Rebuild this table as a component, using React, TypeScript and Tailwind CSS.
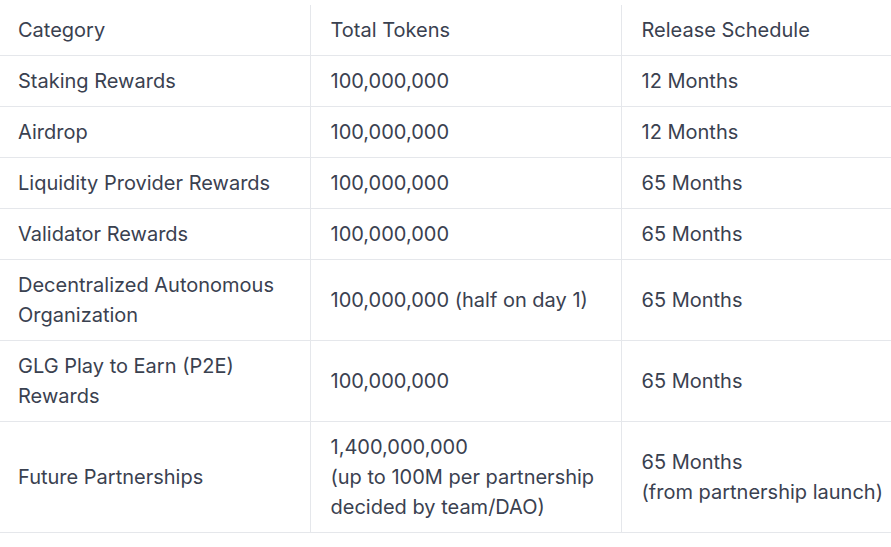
import React from 'react'

type Row = {
  category: string[]
  tokens: string[]
  release: string[]
}

const rows: Row[] = [
  { category: ['Staking Rewards'], tokens: ['100,000,000'], release: ['12 Months'] },
  { category: ['Airdrop'], tokens: ['100,000,000'], release: ['12 Months'] },
  { category: ['Liquidity Provider Rewards'], tokens: ['100,000,000'], release: ['65 Months'] },
  { category: ['Validator Rewards'], tokens: ['100,000,000'], release: ['65 Months'] },
  {
    category: ['Decentralized Autonomous', 'Organization'],
    tokens: ['100,000,000 (half on day 1)'],
    release: ['65 Months'],
  },
  { category: ['GLG Play to Earn (P2E)', 'Rewards'], tokens: ['100,000,000'], release: ['65 Months'] },
  {
    category: ['Future Partnerships'],
    tokens: ['1,400,000,000', '(up to 100M per partnership', 'decided by team/DAO)'],
    release: ['65 Months', '(from partnership launch)'],
  },
]

const Lines = ({ lines }: { lines: string[] }) => (
  <>
    {lines.map((l, i) => (
      <div key={i}>{l}</div>
    ))}
  </>
)

const App = () => {
  return (
    <div
      className="w-[891px] h-[547px] bg-white pt-[5px] overflow-hidden text-[#3a4150]"
      style={{ fontFamily: 'Inter, "Noto Sans", sans-serif' }}
    >
      <table className="w-[891px] table-fixed border-collapse text-[20px] leading-[30px]">
        <colgroup>
          <col className="w-[310px]" />
          <col className="w-[311px]" />
          <col className="w-[270px]" />
        </colgroup>
        <thead>
          <tr className="border-b border-[#e5e7eb]">
            <th className="h-[50px] pl-[18px] text-left font-normal">Category</th>
            <th className="pl-[20px] text-left font-normal border-l border-[#e5e7eb]">Total Tokens</th>
            <th className="pl-[20px] text-left font-normal border-l border-[#e5e7eb]">Release Schedule</th>
          </tr>
        </thead>
        <tbody>
          {rows.map((r, i) => (
            <tr key={i} className="border-b border-[#e5e7eb]">
              <td className="py-[10px] pl-[18px] align-middle whitespace-nowrap">
                <Lines lines={r.category} />
              </td>
              <td className="py-[10px] pl-[20px] align-middle whitespace-nowrap border-l border-[#e5e7eb]">
                <Lines lines={r.tokens} />
              </td>
              <td className="py-[10px] pl-[20px] align-middle whitespace-nowrap border-l border-[#e5e7eb]">
                <Lines lines={r.release} />
              </td>
            </tr>
          ))}
        </tbody>
      </table>
    </div>
  )
}

export default App
